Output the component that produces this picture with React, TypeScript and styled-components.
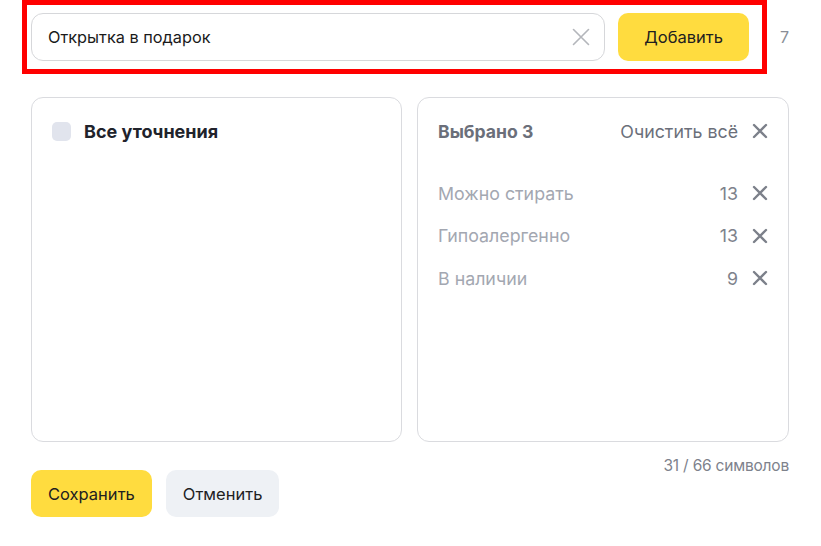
import React from "react";
import styled, { createGlobalStyle } from "styled-components";

const GlobalStyle = createGlobalStyle`
  body {
    margin: 0;
    background: #ffffff;
    font-family: Inter, "Noto Sans", sans-serif;
  }
`;

type Item = { label: string; count: number };

const selected: Item[] = [
  { label: "Можно стирать", count: 13 },
  { label: "Гипоалергенно", count: 13 },
  { label: "В наличии", count: 9 },
];

const CrossIcon = ({ size = 16, stroke = 2.4, color = "#7c808a" }) => (
  <svg width={size} height={size} viewBox="0 0 16 16" fill="none">
    <path d="M2 2L14 14M14 2L2 14" stroke={color} strokeWidth={stroke} strokeLinecap="round" />
  </svg>
);

const App = () => {
  return (
    <Page>
      <GlobalStyle />
      <TopRow>
        <Highlight>
          <InputBox>
            <InputText>Открытка в подарок</InputText>
            <ClearButton>
              <CrossIcon size={20} stroke={1.3} color="#b4b6bb" />
            </ClearButton>
          </InputBox>
          <YellowButton $wide>Добавить</YellowButton>
        </Highlight>
        <Count>7</Count>
      </TopRow>

      <Panels>
        <Panel>
          <PanelHeader>
            <Checkbox />
            <AllTitle>Все уточнения</AllTitle>
          </PanelHeader>
        </Panel>
        <Panel>
          <PanelHeader>
            <SelectedTitle>Выбрано 3</SelectedTitle>
            <ClearAll>
              Очистить всё
              <CrossIcon />
            </ClearAll>
          </PanelHeader>
          <List>
            {selected.map((item) => (
              <Row key={item.label}>
                <RowLabel>{item.label}</RowLabel>
                <RowCount>{item.count}</RowCount>
                <CrossIcon />
              </Row>
            ))}
          </List>
        </Panel>
      </Panels>

      <Footer>
        <Counter>31 / 66 символов</Counter>
        <Buttons>
          <YellowButton>Сохранить</YellowButton>
          <GrayButton>Отменить</GrayButton>
        </Buttons>
      </Footer>
    </Page>
  );
};

export default App;

const Page = styled.div`
  width: 821px;
  height: 546px;
  box-sizing: border-box;
  padding: 0 32px 0 31px;
`;

const TopRow = styled.div`
  display: flex;
  align-items: center;
  margin-left: -9px;
`;

const Highlight = styled.div`
  display: flex;
  align-items: center;
  gap: 13px;
  width: 745px;
  height: 74px;
  box-sizing: border-box;
  border: 5px solid #ff0000;
  padding: 0 13px 0 4px;
`;

const InputBox = styled.div`
  flex: 1;
  height: 48px;
  box-sizing: border-box;
  border: 1px solid #d6d7da;
  border-radius: 12px;
  display: flex;
  align-items: center;
  padding: 0 13px 0 16px;
`;

const InputText = styled.span`
  flex: 1;
  font-size: 16.3px;
  color: #1a1a1a;
`;

const ClearButton = styled.span`
  display: flex;
`;

const YellowButton = styled.button<{ $wide?: boolean }>`
  height: ${(p) => (p.$wide ? "48px" : "47px")};
  padding: 0 ${(p) => (p.$wide ? "26px" : "17px")};
  border: none;
  border-radius: 10px;
  background: #ffdc3f;
  color: #21201f;
  font-family: inherit;
  font-size: 16.5px;
`;

const GrayButton = styled(YellowButton)`
  padding: 0 17px;
  background: #eef1f5;
`;

const Count = styled.span`
  margin-left: 13px;
  font-size: 16px;
  color: #8a8e97;
`;

const Panels = styled.div`
  display: grid;
  grid-template-columns: 371px 372px;
  gap: 15px;
  margin-top: 23px;
`;

const Panel = styled.div`
  height: 345px;
  box-sizing: border-box;
  border: 1px solid #dadbdf;
  border-radius: 12px;
  padding: 21px 20px 0 20px;
`;

const PanelHeader = styled.div`
  display: flex;
  align-items: center;
  height: 24px;
`;

const Checkbox = styled.span`
  width: 19px;
  height: 19px;
  border-radius: 5px;
  background: #e1e4ed;
  margin-right: 13px;
`;

const AllTitle = styled.span`
  font-size: 18px;
  font-weight: 700;
  color: #21232b;
`;

const SelectedTitle = styled.span`
  flex: 1;
  font-size: 17.6px;
  font-weight: 700;
  color: #6b6f7a;
`;

const ClearAll = styled.span`
  display: flex;
  align-items: center;
  gap: 14px;
  font-size: 17.8px;
  color: #6b6f7a;
`;

const List = styled.div`
  display: flex;
  flex-direction: column;
  gap: 18.5px;
  margin-top: 38px;
`;

const Row = styled.div`
  display: flex;
  align-items: center;
  height: 24px;
  font-size: 17.8px;
`;

const RowLabel = styled.span`
  flex: 1;
  color: #a3a7b1;
`;

const RowCount = styled.span`
  color: #7e828c;
  margin-right: 14px;
`;

const Footer = styled.div`
  display: flex;
  flex-direction: column;
  padding-top: 16px;
`;

const Counter = styled.div`
  align-self: flex-end;
  font-size: 15.5px;
  line-height: 16px;
  letter-spacing: -0.2px;
  color: #7e828c;
`;

const Buttons = styled.div`
  display: flex;
  gap: 14px;
  margin-top: -4px;
`;
